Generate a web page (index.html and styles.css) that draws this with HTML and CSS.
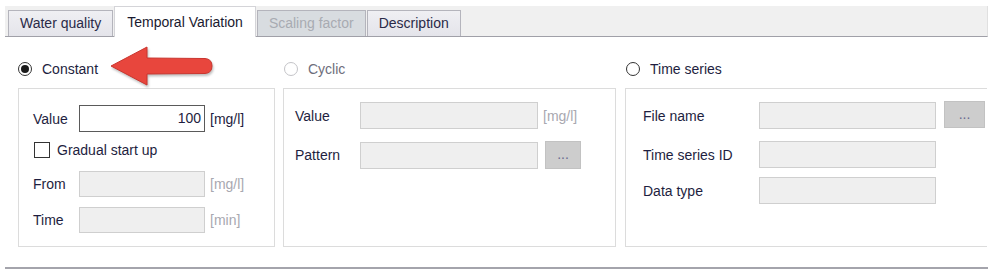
FILE: index.html
```html
<!DOCTYPE html>
<html lang="en">
<head>
<meta charset="UTF-8" />
<title>Temporal Variation</title>
<link rel="stylesheet" href="styles.css">
</head>
<body>
<div class="tabstrip">
  <div class="tab">Water quality</div>
  <div class="tab active">Temporal Variation</div>
  <div class="tab disabled">Scaling factor</div>
  <div class="tab">Description</div>
</div>

<div class="panels">
  <div class="col col-constant">
    <label class="choice"><span class="radio checked"></span>Constant</label>
    <div class="groupbox">
      <div class="row first">
        <span class="lbl">Value</span>
        <span class="field active">100</span>
        <span class="unit">[mg/l]</span>
      </div>
      <div class="row check-row">
        <span class="checkbox"></span>Gradual start up
      </div>
      <div class="row from-row">
        <span class="lbl">From</span>
        <span class="field"></span>
        <span class="unit off">[mg/l]</span>
      </div>
      <div class="row time-row">
        <span class="lbl">Time</span>
        <span class="field"></span>
        <span class="unit off">[min]</span>
      </div>
    </div>
  </div>

  <div class="col col-cyclic">
    <label class="choice off"><span class="radio"></span>Cyclic</label>
    <div class="groupbox">
      <div class="row first">
        <span class="lbl">Value</span>
        <span class="field"></span>
        <span class="unit off">[mg/l]</span>
      </div>
      <div class="row">
        <span class="lbl">Pattern</span>
        <span class="field"></span>
        <span class="dots">...</span>
      </div>
    </div>
  </div>

  <div class="col col-series">
    <label class="choice"><span class="radio"></span>Time series</label>
    <div class="groupbox">
      <div class="row first">
        <span class="lbl">File name</span>
        <span class="field"></span>
        <span class="dots">...</span>
      </div>
      <div class="row">
        <span class="lbl">Time series ID</span>
        <span class="field"></span>
      </div>
      <div class="row last">
        <span class="lbl">Data type</span>
        <span class="field"></span>
      </div>
    </div>
  </div>
</div>

<div class="bottom-line"></div>

<!-- red pointer arrow laid over the dialog -->
<svg class="arrow" width="104" height="44" viewBox="0 0 104 44">
  <path d="M96 12.5 L38 12 L38 1 L2 20 L38 39 L38 28 L96 27.5 Q103 27 103 20 Q103 13 96 12.5 Z" fill="#e8463d" stroke="#c9352e" stroke-width="1"/>
</svg>
</body>
</html>
```

FILE: styles.css
```css
body {
  margin: 0;
  width: 995px;
  height: 271px;
  background: #fff;
  font-family: "Liberation Sans", Arial, sans-serif;
  font-size: 14px;
  color: #1e1e40;
  position: relative;
  overflow: hidden;
}
.tabstrip {
  margin: 6px 0 0 5px;
  width: 983px;
  height: 31px;
  padding-left: 3px;
  box-sizing: border-box;
  background: #f0f0f0;
  border-bottom: 1px solid #a0a0a8;
  border-right: 1px solid #e0e0e0;
  display: flex;
  align-items: flex-end;
}
.tab {
  height: 26px;
  line-height: 25px;
  padding: 0 11px;
  box-sizing: border-box;
  background: linear-gradient(#efeff3, #e4e4ea);
  border: 1px solid #b4b4bc;
  border-bottom: none;
  margin-right: 1px;
  color: #2a2a48;
}
.tab.active {
  height: 31px;
  line-height: 30px;
  margin-bottom: -1px;
  background: #fff;
  border-color: #d4d4d8;
  padding: 0 12px;
  color: #1a1a30;
}
.tab.disabled {
  background: #d8dce0;
  color: #a8abb2;
}
.panels {
  display: grid;
  grid-template-columns: 257px 333px 363px;
  gap: 8px;
  margin-left: 18px;
}
.col-series {
  margin-left: 1px;
}
.choice {
  display: flex;
  align-items: center;
  height: 20px;
  margin: 22px 0 9px;
  gap: 10px;
}
.choice.off {
  color: #6e6e7c;
}
.col-cyclic .choice,
.col-series .choice {
  margin-left: 1px;
}
.radio {
  width: 12px;
  height: 12px;
  border: 1.5px solid #333;
  border-radius: 50%;
  position: relative;
}
.choice.off .radio {
  border-color: #c4c4c8;
}
.radio.checked::after {
  content: "";
  position: absolute;
  left: 2px;
  top: 2px;
  width: 8px;
  height: 8px;
  border-radius: 50%;
  background: #1a1a1a;
}
.groupbox {
  height: 159px;
  box-sizing: border-box;
  border: 1px solid #dcdcdc;
}
.row {
  display: flex;
  align-items: center;
  margin-top: 12px;
}
.lbl {
  flex: none;
}
.field {
  height: 27px;
  box-sizing: border-box;
  background: #efefef;
  border: 1px solid #cfcfcf;
  text-align: right;
  line-height: 25px;
  padding-right: 3px;
}
.field.active {
  background: #fff;
  border-color: #5a5a5a;
}
.unit {
  margin-left: 5px;
}
.unit.off {
  color: #a8a8b0;
}
.dots {
  height: 28px;
  box-sizing: border-box;
  background: #cdcdcd;
  border: 1px solid #c2c2c2;
  color: #6a6a90;
  text-align: center;
  line-height: 24px;
}

/* Constant */
.col-constant .groupbox {
  padding: 0 0 0 14px;
}
.col-constant .lbl {
  width: 46px;
}
.col-constant .field {
  width: 126px;
}
.col-constant .row.first {
  margin-top: 16px;
}
.check-row {
  margin-top: 10px;
  gap: 7px;
  padding-left: 1px;
}
.checkbox {
  width: 14px;
  height: 14px;
  border: 1.5px solid #333;
}
.col-constant .from-row {
  margin-top: 13px;
}
.col-constant .time-row {
  margin-top: 10px;
}
.col-constant .from-row .field,
.col-constant .time-row .field {
  height: 26px;
}

/* Cyclic */
.col-cyclic .groupbox {
  padding-left: 11px;
}
.col-cyclic .lbl {
  width: 65px;
}
.col-cyclic .field {
  width: 178px;
}
.col-cyclic .row.first {
  margin-top: 13px;
}
.col-cyclic .dots {
  width: 36px;
  margin-left: 7px;
}

/* Time series */
.col-series .groupbox {
  padding-left: 17px;
  border-right: none;
}
.col-series .lbl {
  width: 116px;
}
.col-series .field {
  width: 177px;
}
.col-series .row.first {
  margin-top: 13px;
}
.col-series .row.last {
  margin-top: 9px;
}
.col-series .dots {
  width: 41px;
  height: 27px;
  margin-left: 8px;
  margin-top: -2px;
}
.bottom-line {
  margin: 20px 0 0 5px;
  width: 983px;
  height: 2px;
  background: #a4a4ac;
}
.arrow {
  position: absolute;
  left: 109px;
  top: 46px;
  filter: drop-shadow(1px 2px 1px rgba(0, 0, 0, 0.25));
}
```
